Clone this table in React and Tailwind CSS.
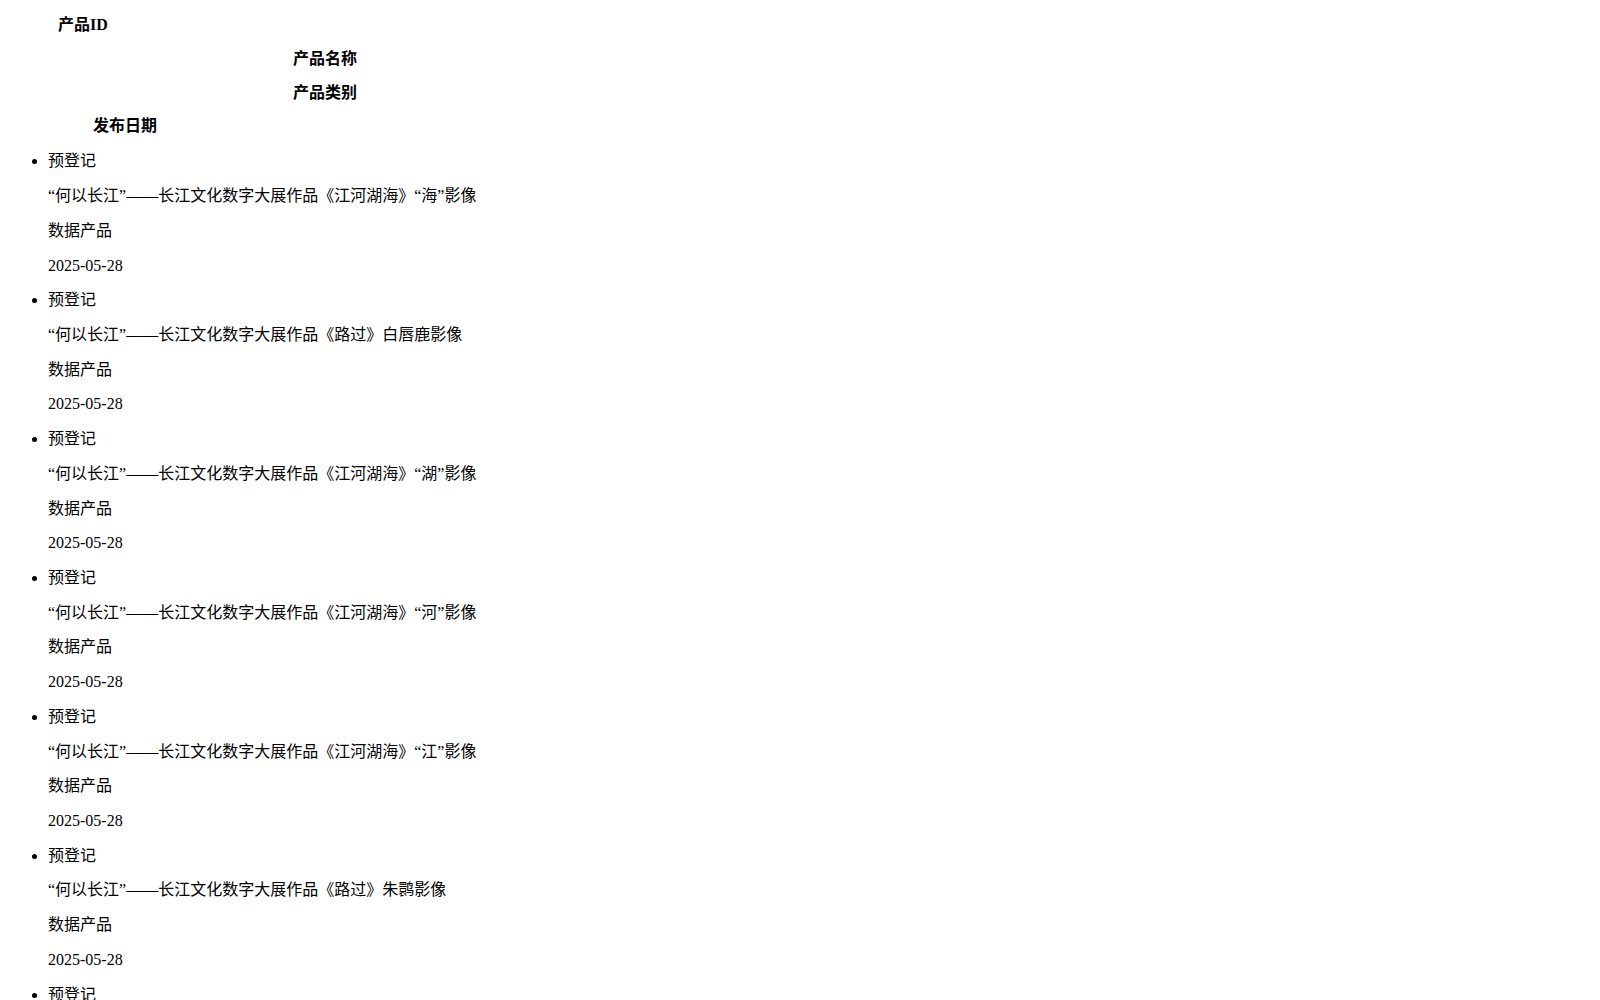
const HEADERS = [
  { label: "产品ID", pad: "pl-[50px]" },
  { label: "产品名称", pad: "pl-[285px]" },
  { label: "产品类别", pad: "pl-[285px]" },
  { label: "发布日期", pad: "pl-[85px]" },
];

const ITEMS = [
  "“何以长江”——长江文化数字大展作品《江河湖海》“海”影像",
  "“何以长江”——长江文化数字大展作品《路过》白唇鹿影像",
  "“何以长江”——长江文化数字大展作品《江河湖海》“湖”影像",
  "“何以长江”——长江文化数字大展作品《江河湖海》“河”影像",
  "“何以长江”——长江文化数字大展作品《江河湖海》“江”影像",
  "“何以长江”——长江文化数字大展作品《路过》朱鹮影像",
  "“何以长江”——长江文化数字大展作品《路过》江豚影像",
  "“何以长江”——长江文化数字大展作品《路过》麋鹿影像",
  "“何以长江”——长江文化数字大展作品《路过》中华鲟影像",
  "“何以长江”——长江文化数字大展作品《路过》金丝猴影像",
  "“何以长江”——长江文化数字大展作品《路过》大熊猫影像",
  "“何以长江”——长江文化数字大展作品《路过》雪豹影像",
  "“何以长江”——长江文化数字大展作品《路过》藏羚羊影像",
];

const font = "font-['Liberation_Serif','Noto_Sans_CJK_SC',serif]";

export default function App() {
  return (
    <div className={`bg-white text-black text-[16px] px-[8px] pt-[15px] pb-[24px] ${font}`}>
      <div className="flex flex-col gap-[14.8px]">
        {HEADERS.map((h) => (
          <div key={h.label} className={`h-[19px] leading-[19px] font-bold ${h.pad}`}>
            {h.label}
          </div>
        ))}
      </div>
      <ul className="list-disc pl-[40px] mt-[16px] leading-[19px]">
        {ITEMS.map((name, i) => (
          <li key={i} className="leading-[19px] mb-[15.73px]">
            <p className="leading-[19px] mb-[15.73px]">预登记</p>
            <p className="leading-[19px] mb-[15.73px]">{name}</p>
            <p className="leading-[19px] mb-[15.73px]">数据产品</p>
            <p className="leading-[19px]">2025-05-28</p>
          </li>
        ))}
      </ul>
    </div>
  );
}
